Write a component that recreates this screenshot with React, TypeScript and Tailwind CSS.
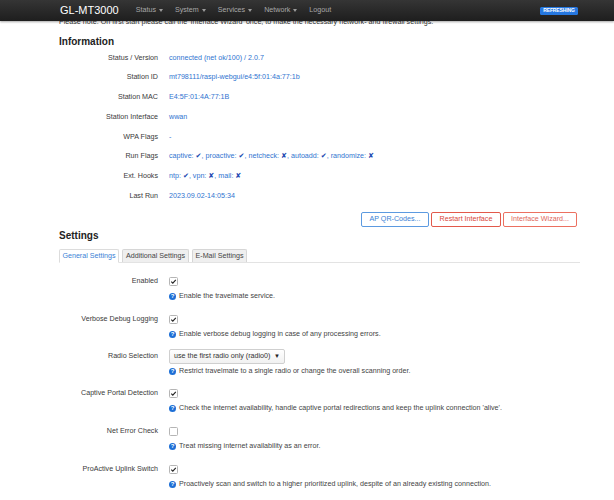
import React from 'react';

const INFO_ROWS: { label: string; value: React.ReactNode }[] = [
  { label: 'Status / Version', value: 'connected (net ok/100) / 2.0.7' },
  { label: 'Station ID', value: 'mt798111/raspi-webgui/e4:5f:01:4a:77:1b' },
  { label: 'Station MAC', value: 'E4:5F:01:4A:77:1B' },
  { label: 'Station Interface', value: 'wwan' },
  { label: 'WPA Flags', value: '-' },
];

const Yes = () => <span className="text-[#1a47b0]">✔</span>;
const No = () => <span className="text-[#1a47b0]">✘</span>;

const Caret = () => (
  <span className="ml-[3px] inline-block h-0 w-0 border-x-[2.5px] border-t-[3px] border-x-transparent border-t-[#9a9a9a] align-middle" />
);

const CheckBox = ({ checked }: { checked: boolean }) => (
  <span className="flex h-[9px] w-[9px] items-center justify-center rounded-[1.5px] border border-[#b5b5b5] bg-white">
    {checked && (
      <svg width="7" height="7" viewBox="0 0 10 10">
        <path d="M1.8 5.2 L4 7.4 L8.3 2.6" fill="none" stroke="#222" strokeWidth="1.6" />
      </svg>
    )}
  </span>
);

const HelpIcon = () => (
  <span className="mr-[3px] flex h-[7px] w-[7px] items-center justify-center rounded-full bg-[#1d6fd6] text-[6px] font-bold leading-none text-white">?</span>
);

const Setting = ({ label, control, help }: { label: string; control: React.ReactNode; help: string }) => (
  <div className="h-[38px]">
    <div className="flex h-[12px] items-center">
      <div className="w-[99px] text-right text-[7.15px] text-[#3a3a3a]">{label}</div>
      <div className="ml-[11px]">{control}</div>
    </div>
    <div className="mt-[3px] flex h-[12px] items-center pl-[110px] text-[7.15px] text-[#444]">
      <HelpIcon />
      {help}
    </div>
  </div>
);

export default function App() {
  return (
    <div className="min-h-[500px] w-[614px] overflow-hidden bg-white" style={{ fontFamily: '"Liberation Sans", Arial, "DejaVu Sans", sans-serif' }}>
      {/* top bar */}
      <header className="relative z-10 flex h-[21px] items-center bg-linear-to-b from-[#353535] to-[#1e1e1e] pl-[60px] shadow-[0_1px_2px_rgba(0,0,0,0.35)]">
        <span className="text-[11px] leading-none text-white">GL-MT3000</span>
        <nav className="ml-[17px] flex gap-[12px] text-[7.15px] text-[#a8a8a8]">
          <span>Status<Caret /></span>
          <span>System<Caret /></span>
          <span>Services<Caret /></span>
          <span>Network<Caret /></span>
          <span>Logout</span>
        </nav>
        <span className="mr-[36px] ml-auto flex h-[8px] w-[38px] items-center justify-center rounded-[1.5px] bg-[#2577e0] text-[5px] font-bold tracking-tight text-white">
          REFRESHING
        </span>
      </header>

      <div className="ml-[59px] w-[521px]">
        {/* note, half hidden under the bar */}
        <div className="h-[6px] overflow-hidden">
          <p className="-mt-[4px] whitespace-nowrap text-[7.15px] leading-[10px] text-[#333]">
            Please note: On first start please call the 'Interface Wizard' once, to make the necessary network- and firewall settings.
          </p>
        </div>

        <h2 className="mt-[9px] text-[10px] font-bold leading-[12px] text-[#222]">Information</h2>

        <div className="text-[7.15px]">
          {INFO_ROWS.map((r) => (
            <div key={r.label} className="flex h-[19.75px] items-center">
              <div className="w-[99px] text-right text-[#3a3a3a]">{r.label}</div>
              <div className="ml-[11px] text-[#2f74d0]">{r.value}</div>
            </div>
          ))}
          <div className="flex h-[19.75px] items-center">
            <div className="w-[99px] text-right text-[#3a3a3a]">Run Flags</div>
            <div className="ml-[11px] text-[#2f74d0]">
              captive: <Yes />, proactive: <Yes />, netcheck: <No />, autoadd: <Yes />, randomize: <No />
            </div>
          </div>
          <div className="flex h-[19.75px] items-center">
            <div className="w-[99px] text-right text-[#3a3a3a]">Ext. Hooks</div>
            <div className="ml-[11px] text-[#2f74d0]">
              ntp: <Yes />, vpn: <No />, mail: <No />
            </div>
          </div>
          <div className="flex h-[19.75px] items-center">
            <div className="w-[99px] text-right text-[#3a3a3a]">Last Run</div>
            <div className="ml-[11px] text-[#2f74d0]">2023.09.02-14:05:34</div>
          </div>
        </div>

        <div className="mt-[6px] flex justify-end gap-[2px] pr-[3px] text-[7.15px]">
          <button className="h-[15px] w-[68px] rounded-[2px] border border-[#5c9ae0] bg-white text-[#3a7fd5]">AP QR-Codes...</button>
          <button className="h-[15px] w-[70px] rounded-[2px] border border-[#e2594b] bg-white text-[#d9473a]">Restart Interface</button>
          <button className="h-[15px] w-[74px] rounded-[2px] border border-[#ec7060] bg-white text-[#e0665a]">Interface Wizard...</button>
        </div>

        <h2 className="mt-[3px] text-[10px] font-bold leading-[12px] text-[#222]">Settings</h2>

        <div className="mt-[7px] flex items-end gap-[3px] border-b border-[#e3e3e3] text-[7.15px]">
          <span className="-mb-px flex h-[14px] w-[60px] items-center justify-center rounded-t-[2px] border border-b-white border-[#dcdcdc] bg-white text-[#3a7fd5]">General Settings</span>
          <span className="flex h-[13px] w-[67px] items-center justify-center rounded-t-[2px] border border-b-0 border-[#d6d6d6] bg-[#efefef] text-[#444]">Additional Settings</span>
          <span className="flex h-[13px] w-[55px] items-center justify-center rounded-t-[2px] border border-b-0 border-[#d6d6d6] bg-[#efefef] text-[#444]">E-Mail Settings</span>
        </div>

        <div className="pt-[12px]">
          <Setting label="Enabled" control={<CheckBox checked />} help="Enable the travelmate service." />
          <Setting label="Verbose Debug Logging" control={<CheckBox checked />} help="Enable verbose debug logging in case of any processing errors." />
          <div className="h-[38px]">
            <div className="-mt-[2px] flex h-[15px] items-center">
              <div className="w-[99px] text-right text-[7.15px] text-[#3a3a3a]">Radio Selection</div>
              <div className="ml-[11px] flex h-[15px] w-[116px] items-center justify-between rounded-[2px] border border-[#cfcfcf] bg-linear-to-b from-white to-[#f1f1f1] px-[4px] text-[7.15px] text-[#333]">
                <span>use the first radio only (radio0)</span>
                <span className="text-[6px] text-[#222]">▼</span>
              </div>
            </div>
            <div className="mt-[1px] flex h-[12px] items-center pl-[110px] text-[7.15px] text-[#444]">
              <HelpIcon />
              Restrict travelmate to a single radio or change the overall scanning order.
            </div>
          </div>
          <Setting label="Captive Portal Detection" control={<CheckBox checked />} help="Check the internet availability, handle captive portal redirections and keep the uplink connection 'alive'." />
          <Setting label="Net Error Check" control={<CheckBox checked={false} />} help="Treat missing internet availability as an error." />
          <Setting label="ProActive Uplink Switch" control={<CheckBox checked />} help="Proactively scan and switch to a higher prioritized uplink, despite of an already existing connection." />
        </div>
      </div>
    </div>
  );
}
